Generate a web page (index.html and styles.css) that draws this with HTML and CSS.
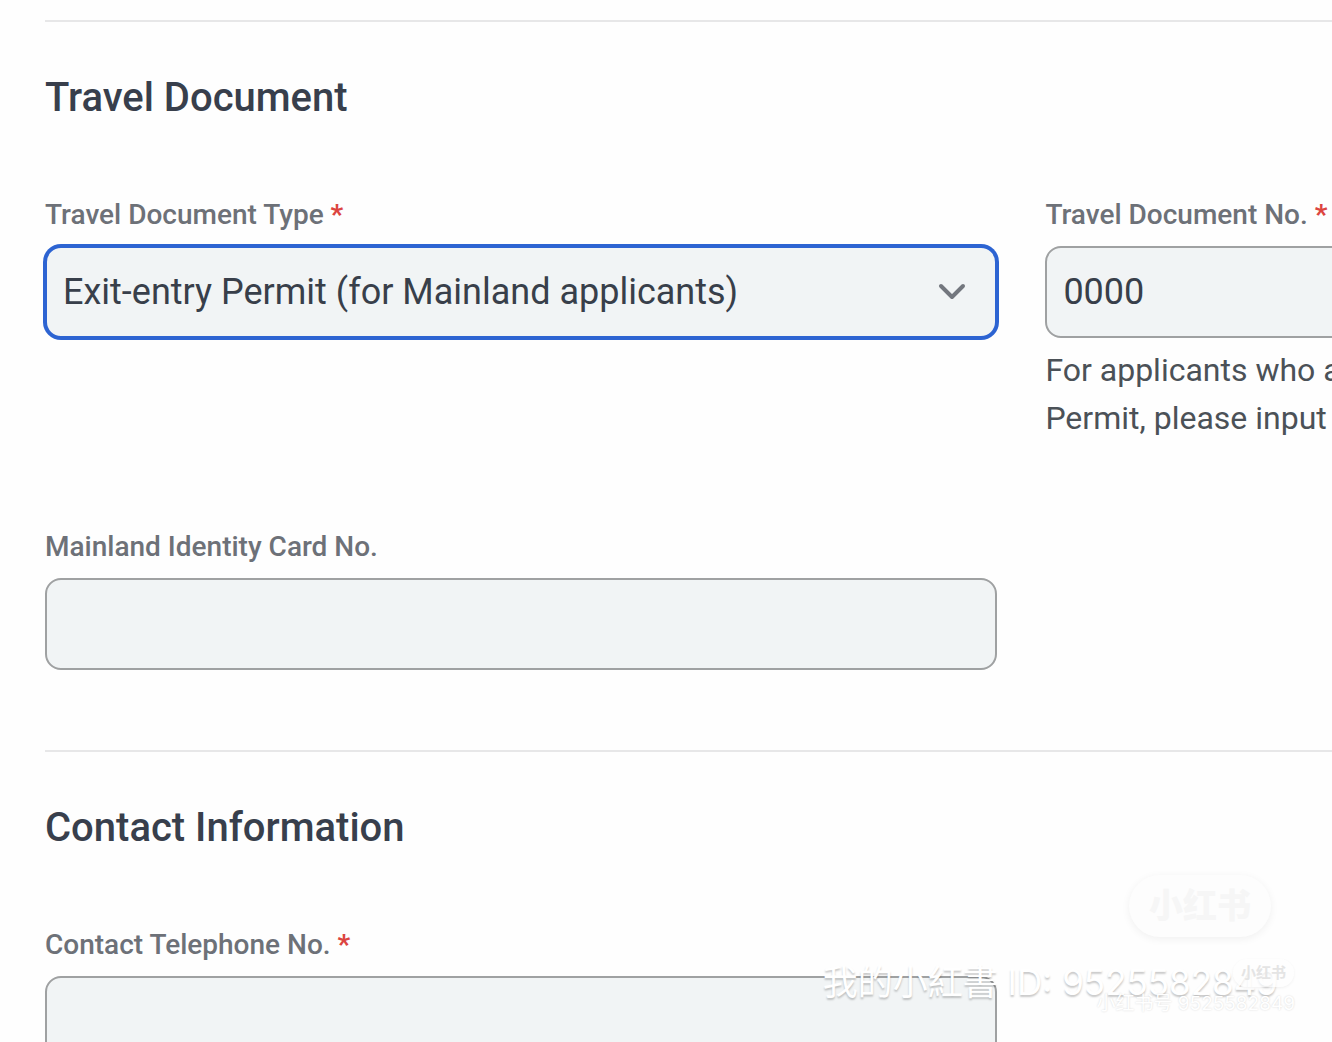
FILE: index.html
```html
<!DOCTYPE html>
<html lang="en">
<head>
  <meta charset="UTF-8">
  <meta name="viewport" content="width=device-width, initial-scale=1.0">
  <title>Travel Document</title>
  <link rel="stylesheet" href="styles.css">
</head>
<body>
  <form class="form">
    <section class="section">
      <h2>Travel Document</h2>
      <div class="fields">
        <div class="field">
          <label for="docType">Travel Document Type <span class="required">*</span></label>
          <div class="select-wrap">
            <select id="docType" class="control active">
              <option selected>Exit-entry Permit (for Mainland applicants)</option>
            </select>
            <svg class="chevron" viewBox="0 0 28 18" fill="none" aria-hidden="true">
              <path d="M3 3L14 14L25 3" stroke="currentColor" stroke-width="4" stroke-linecap="round" stroke-linejoin="round"/>
            </svg>
          </div>
        </div>
        <div class="field">
          <label for="docNo">Travel Document No. <span class="required">*</span></label>
          <input type="text" id="docNo" class="control" value="0000">
          <p class="hint">For applicants who are<br>Permit, please input</p>
        </div>
        <div class="field">
          <label for="idCard">Mainland Identity Card No.</label>
          <input type="text" id="idCard" class="control">
        </div>
      </div>
    </section>

    <section class="section">
      <h2>Contact Information</h2>
      <div class="fields">
        <div class="field">
          <label for="phone">Contact Telephone No. <span class="required">*</span></label>
          <input type="tel" id="phone" class="control">
        </div>
      </div>
    </section>
  </form>

  <div class="watermark badge-large">小红书</div>
  <div class="watermark account">我的小紅書 ID: 9525582849</div>
  <div class="watermark badge-small">小红书</div>
  <div class="watermark account-small">小红书号 9525582849</div>
</body>
</html>
```

FILE: styles.css
```css
* {
  box-sizing: border-box;
}
body {
  position: relative;
  height: 100vh;
  margin: 0;
  overflow: hidden;
  background-color: #fefefe;
  font-family: Roboto, "Noto Sans CJK SC", sans-serif;
  color: #374151;
}
.form {
  padding: 20px 0 0 45px;
}
.section {
  padding: 46px 0 80px;
  border-top: 2px solid #e7e7e8;
}
h2 {
  margin: 0 0 66px;
  font-size: 40px;
  font-weight: 500;
  line-height: 60px;
  color: #383f4c;
}
.fields {
  display: grid;
  grid-template-columns: 74% 74%;
  gap: 84px 48px;
}
label {
  display: block;
  margin-bottom: 10px;
  font-size: 28px;
  font-weight: 500;
  line-height: 42px;
  color: #6d7178;
}
.required {
  font-weight: 700;
  color: #dc4540;
}
.control {
  display: block;
  width: 100%;
  height: 92px;
  margin: 0;
  padding: 0 16px;
  border: 2px solid #9fa1a2;
  border-radius: 16px;
  outline: none;
  appearance: none;
  background-color: #f1f4f5;
  font-family: inherit;
  font-size: 36px;
  color: #383f4a;
}
.control.active,
.control:focus {
  border-color: #2d64d2;
  box-shadow: 0 0 0 2px #2d64d2;
}
.select-wrap {
  position: relative;
}
.chevron {
  position: absolute;
  top: 37px;
  right: 31px;
  width: 28px;
  height: 18px;
  color: #73777e;
  pointer-events: none;
}
.hint {
  margin: 8px 0 0;
  font-size: 32px;
  line-height: 48px;
  color: #4b5157;
}

/* watermarks over the page */
.watermark {
  position: absolute;
  font-family: Inter, "Noto Sans CJK SC", sans-serif;
  white-space: nowrap;
  pointer-events: none;
}
.account {
  right: 54px;
  bottom: 36px;
  font-size: 35px;
  line-height: 48px;
  color: #fff;
  text-shadow: 0 2px 2px rgba(0, 0, 0, 0.22);
}
.badge-large {
  right: 61px;
  bottom: 105px;
  padding: 0 20px;
  border-radius: 32px;
  background-color: #fdfdfd;
  box-shadow: 0 2px 8px rgba(0, 0, 0, 0.06);
  font-size: 34px;
  font-weight: 900;
  line-height: 62px;
  color: #f6f6f6;
}
.badge-small {
  right: 38px;
  bottom: 55px;
  padding: 0 8px;
  border-radius: 14px;
  background-color: rgba(254, 254, 254, 0.7);
  box-shadow: 0 1px 3px rgba(0, 0, 0, 0.06);
  font-size: 15px;
  font-weight: 700;
  line-height: 28px;
  color: #e4e4e4;
}
.account-small {
  right: 37px;
  bottom: 24px;
  font-size: 19px;
  line-height: 28px;
  color: #fff;
  text-shadow: 0 0 2px rgba(0, 0, 0, 0.16);
}
```
